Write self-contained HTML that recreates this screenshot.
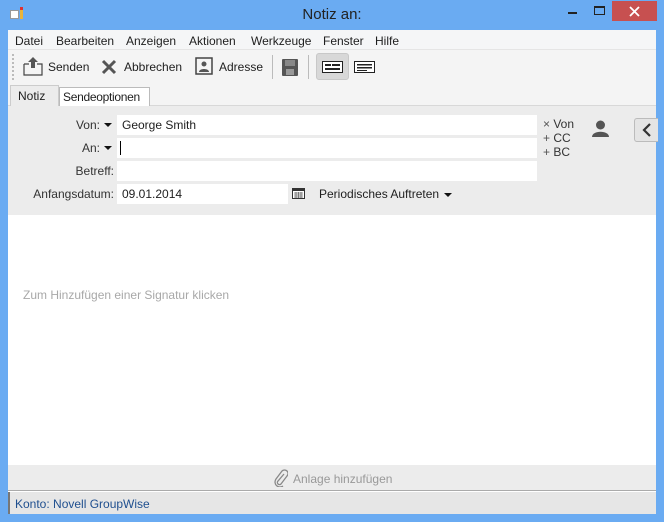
<!DOCTYPE html>
<html><head><meta charset="utf-8"><style>
*{margin:0;padding:0;box-sizing:border-box}
body{width:664px;height:522px;background:#6aabf2;font-family:"Liberation Sans",sans-serif;font-size:12px;color:#1e1e1e;position:relative;overflow:hidden}
.abs{position:absolute}
.title{left:0;top:0;width:664px;height:30px;text-align:center;line-height:30px;font-size:15px;color:#222}
.close{left:612px;top:1px;width:45px;height:20px;background:#c75050}
.inner{left:8px;top:30px;width:648px;height:484px;background:#fff}
.menu{left:8px;top:30px;width:648px;height:20px;background:#f5f6f7;border-bottom:1px solid #e5e5e5}
.menu span{position:absolute;top:4px}
.tb{left:8px;top:50px;width:648px;height:56px;background:#f4f4f4;border-bottom:1px solid #d8d8d8}
.tbt{position:absolute;top:10px;font-size:12px}
.form{left:8px;top:106px;width:648px;height:109px;background:#ececec}
.in{position:absolute;background:#fff;height:20px}
.lab{position:absolute;text-align:right;width:106px;left:0;color:#333}
.gray{color:#555}
.tri{position:absolute;width:0;height:0;border-left:4px solid transparent;border-right:4px solid transparent;border-top:4px solid #111}
</style></head><body>
<div class="abs title">Notiz an:</div>
<svg class="abs" style="left:10px;top:6px" width="14" height="16"><rect x="0.5" y="4.5" width="8" height="8" fill="#fff" stroke="#999"/><rect x="10" y="1" width="3" height="12" fill="#e9b43a"/><rect x="10" y="1" width="3" height="3" fill="#d33"/></svg>
<div class="abs" style="left:568px;top:12px;width:9px;height:2px;background:#222"></div>
<div class="abs" style="left:594px;top:6px;width:11px;height:9px;border:1px solid #222;border-top-width:2px"></div>
<div class="abs close"></div>
<svg class="abs" style="left:629px;top:6px" width="11" height="11"><path d="M1 1L10 10M10 1L1 10" stroke="#fff" stroke-width="1.8"/></svg>
<div class="abs inner"></div>
<div class="abs menu">
<span style="left:7px">Datei</span><span style="left:48px">Bearbeiten</span><span style="left:118px">Anzeigen</span><span style="left:181px">Aktionen</span><span style="left:243px">Werkzeuge</span><span style="left:315px">Fenster</span><span style="left:367px">Hilfe</span>
</div>
<div class="abs tb">
<div style="position:absolute;left:4px;top:4px;width:2px;height:26px;border-left:2px dotted #bbb"></div>
<svg style="position:absolute;left:15px;top:6px" width="20" height="20"><path d="M1 8h5M14 8h5v11H1V8" fill="none" stroke="#444" stroke-width="1.2"/><path d="M10 1l5 5h-3v6H8V6H5z" fill="#555"/></svg>
<span class="tbt" style="left:40px">Senden</span>
<svg style="position:absolute;left:93px;top:9px" width="16" height="16"><path d="M2 2L14 14M14 2L2 14" stroke="#555" stroke-width="3"/></svg>
<span class="tbt" style="left:116px">Abbrechen</span>
<svg style="position:absolute;left:187px;top:7px" width="18" height="18"><rect x="1" y="1" width="16" height="16" fill="none" stroke="#444" stroke-width="1.5"/><circle cx="9" cy="7" r="2.5" fill="#555"/><path d="M4 15c0-4 10-4 10 0z" fill="#555"/></svg>
<span class="tbt" style="left:211px">Adresse</span>
<div style="position:absolute;left:264px;top:5px;width:1px;height:24px;background:#bbb"></div>
<svg style="position:absolute;left:274px;top:9px" width="16" height="17"><rect x="0" y="0" width="16" height="17" rx="1" fill="#555"/><rect x="3" y="1" width="10" height="6" fill="#888"/><rect x="4" y="10" width="8" height="6" fill="#999"/></svg>
<div style="position:absolute;left:300px;top:5px;width:1px;height:24px;background:#bbb"></div>
<div style="position:absolute;left:308px;top:3px;width:33px;height:27px;background:#d8d8d8;border:1px solid #c8c8c8;border-radius:3px"></div>
<svg style="position:absolute;left:314px;top:11px" width="21" height="12"><rect x="0.5" y="0.5" width="20" height="11" fill="#fff" stroke="#222"/><rect x="3" y="3" width="6" height="2" fill="#222"/><rect x="10" y="3" width="8" height="2" fill="#222"/><rect x="3" y="7" width="15" height="2" fill="#222"/></svg>
<svg style="position:absolute;left:346px;top:11px" width="21" height="12"><rect x="0.5" y="0.5" width="20" height="11" fill="#fff" stroke="#222"/><rect x="3" y="3" width="15" height="1.5" fill="#222"/><rect x="3" y="6" width="15" height="1.5" fill="#222"/><rect x="3" y="9" width="10" height="1" fill="#222"/></svg>
<div style="position:absolute;left:2px;top:35px;width:49px;height:21px;background:#ececec;border:1px solid #ccc;border-bottom:none"></div>
<span style="position:absolute;left:10px;top:39px">Notiz</span>
<div style="position:absolute;left:51px;top:37px;width:91px;height:19px;background:#fff;border:1px solid #bbb;border-bottom:none"></div>
<span style="position:absolute;left:55px;top:40px;letter-spacing:-0.3px">Sendeoptionen</span>
</div>
<div class="abs form">
<span class="lab" style="top:12px;width:92px">Von:</span><div class="tri" style="left:96px;top:17px"></div>
<div class="in" style="left:109px;top:9px;width:420px"><span style="position:absolute;left:5px;top:3px">George Smith</span></div>
<span class="lab" style="top:35px;width:92px">An:</span><div class="tri" style="left:96px;top:40px"></div>
<div class="in" style="left:109px;top:32px;width:420px"><div style="position:absolute;left:3px;top:3px;width:1px;height:14px;background:#000"></div></div>
<span class="lab" style="top:58px">Betreff:</span>
<div class="in" style="left:109px;top:55px;width:420px"></div>
<span class="lab" style="top:81px">Anfangsdatum:</span>
<div class="in" style="left:109px;top:78px;width:171px"><span style="position:absolute;left:5px;top:3px">09.01.2014</span></div>
<svg style="position:absolute;left:284px;top:82px" width="13" height="11"><rect x="0.5" y="0.5" width="12" height="10" fill="#fff" stroke="#333"/><rect x="0" y="0" width="13" height="3" fill="#333"/><path d="M2 5h9M2 7h9M2 9h9M4 4v6M6.5 4v6M9 4v6" stroke="#666" stroke-width="0.8"/></svg>
<span class="abs" style="left:311px;top:81px">Periodisches Auftreten</span><div class="tri" style="left:436px;top:87px"></div>
<span class="abs gray" style="left:535px;top:11px">× <span style="color:#333">Von</span></span>
<span class="abs gray" style="left:535px;top:25px">+ <span style="color:#333">CC</span></span>
<span class="abs gray" style="left:535px;top:39px">+ <span style="color:#333">BC</span></span>
<svg style="position:absolute;left:584px;top:14px" width="17" height="17"><circle cx="8.5" cy="5" r="4.5" fill="#555"/><path d="M0 17c0-7 17-7 17 0z" fill="#555"/></svg>
<div style="position:absolute;left:626px;top:12px;width:24px;height:24px;background:#e4e4e4;border:1px solid #bbb;border-right:none;border-radius:3px 0 0 3px"></div>
<svg style="position:absolute;left:634px;top:17px" width="10" height="14"><path d="M8 1L2 7l6 6" fill="none" stroke="#333" stroke-width="2.2"/></svg>
</div>
<span class="abs" style="left:23px;top:288px;color:#a8a8a8">Zum Hinzufügen einer Signatur klicken</span>
<div class="abs" style="left:8px;top:465px;width:648px;height:26px;background:#ececec;border-bottom:1px solid #aaa"></div>
<svg class="abs" style="left:274px;top:469px" width="14" height="18"><path d="M10 5L4 12a2 2 0 0 0 3 3l6-8a3.5 3.5 0 0 0-5-5L2 10a5 5 0 0 0 7 7" fill="none" stroke="#888" stroke-width="1.3"/></svg>
<span class="abs" style="left:293px;top:472px;color:#999">Anlage hinzufügen</span>
<div class="abs" style="left:8px;top:492px;width:648px;height:22px;background:#e6e6e6;border-left:2px solid #777"></div>
<span class="abs" style="left:15px;top:497px;color:#1f4f8f">Konto: Novell GroupWise</span>
</body></html>
